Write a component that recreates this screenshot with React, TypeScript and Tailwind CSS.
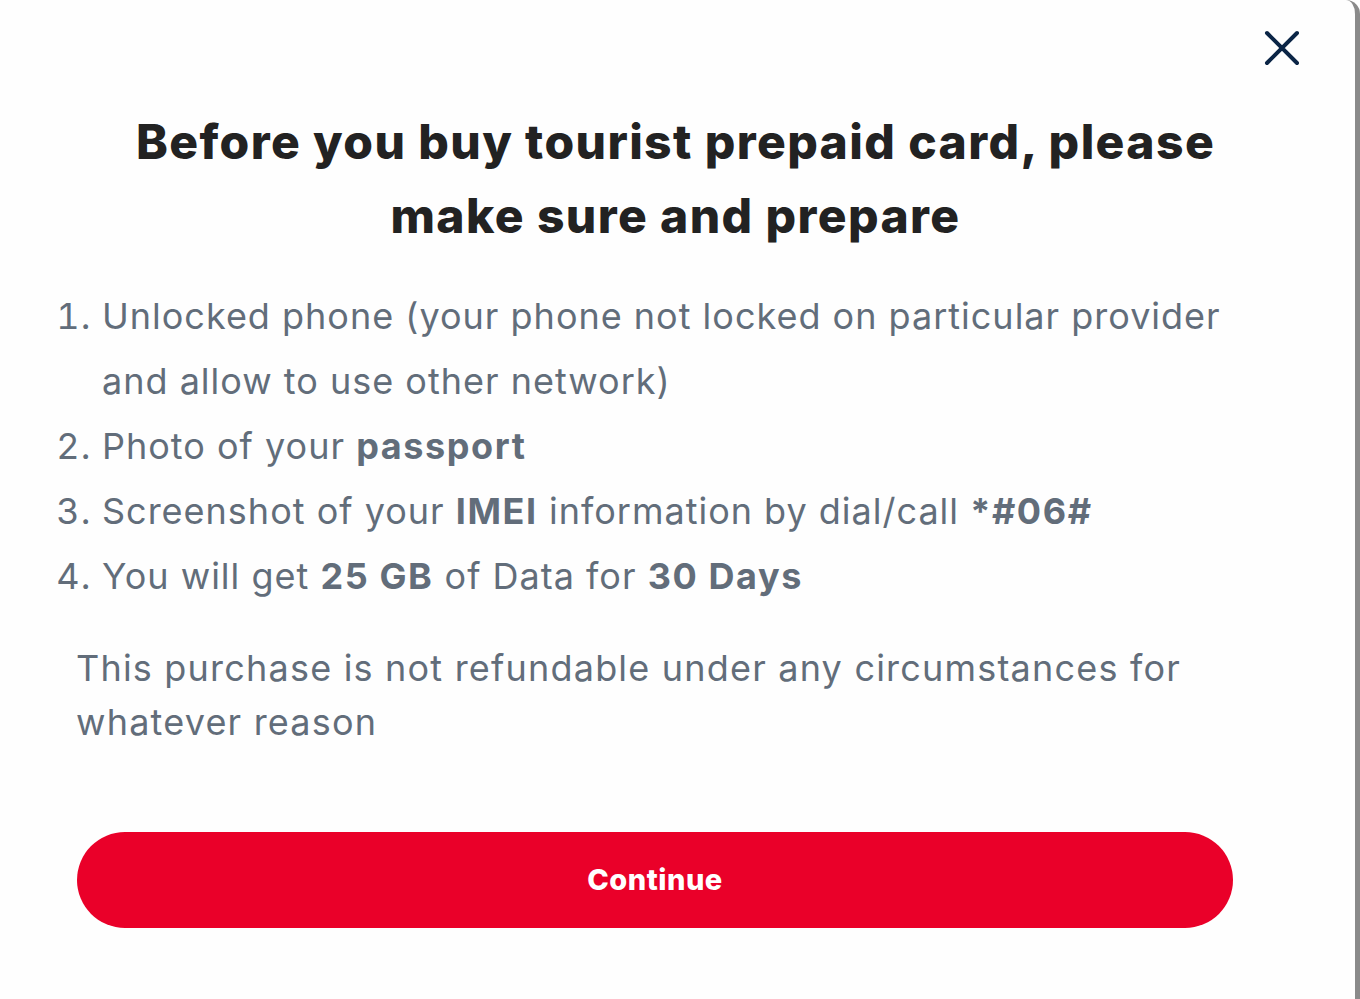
import React from "react";

const B = ({ children }: { children: React.ReactNode }) => (
  <b className="font-bold tracking-[1.6px]">{children}</b>
);

const items: React.ReactNode[] = [
  <>Unlocked phone (your phone not locked on particular provider and allow to use other network)</>,
  <>Photo of your <B>passport</B></>,
  <>Screenshot of your <B>IMEI</B> information by dial/call <B>*#06#</B></>,
  <>You will get <B>25 GB</B> of Data for <B>30 Days</B></>,
];

export default function App() {
  return (
    <div className="relative h-[999px] w-[1360px] overflow-hidden bg-white font-['Inter',sans-serif]">
      <div className="relative h-full w-[1360px] border-r-[5px] border-[#8a8a8a] rounded-tr-[14px] bg-[#fefefe]">
        {/* close */}
        <button className="absolute left-[1262px] top-[28px] h-[40px] w-[40px]">
          <svg viewBox="0 0 40 40" className="h-[40px] w-[40px]" fill="none" stroke="#0b2546" strokeWidth="4" strokeLinecap="round">
            <path d="M5 5 L35 35 M35 5 L5 35" />
          </svg>
        </button>

        <h2 className="pt-[105px] pr-[4px] text-center text-[48px] leading-[74px] font-extrabold text-[#222222] tracking-[1.4px]">
          Before you buy tourist prepaid card, please
          <br />
          make sure and prepare
        </h2>

        <ol className="mt-[31px] ml-[102px] mr-[115px] list-decimal text-[36px] leading-[65px] text-[#626d7a] tracking-[1px]">
          {items.map((it, i) => (
            <li key={i}>{it}</li>
          ))}
        </ol>

        <p className="mt-[32px] ml-[76px] mr-[150px] text-[36px] leading-[54px] text-[#626d7a] tracking-[1.2px]">
          This purchase is not refundable under any circumstances for whatever reason
        </p>

        <button className="mt-[83px] ml-[77px] flex h-[96px] w-[1156px] items-center justify-center rounded-full bg-[#ea0029] text-[29px] font-extrabold text-white tracking-[0.5px]">
          Continue
        </button>
      </div>
    </div>
  );
}
